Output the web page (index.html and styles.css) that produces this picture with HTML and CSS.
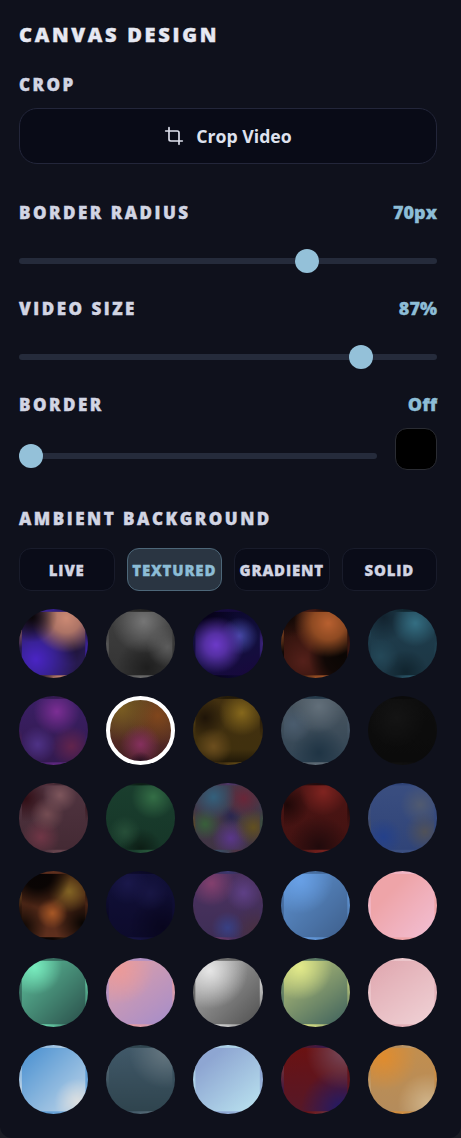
FILE: index.html
```html
<!DOCTYPE html>
<html lang="en">
<head>
<meta charset="utf-8">
<title>Canvas Design</title>
<link rel="stylesheet" href="styles.css">
</head>
<body>
<main class="panel">
  <h1 class="title">CANVAS DESIGN</h1>

  <section class="crop">
    <h2 class="label">CROP</h2>
    <button class="crop-btn" type="button">
      <svg class="crop-icon" viewBox="0 0 24 24" fill="none" stroke="currentColor" stroke-width="2" stroke-linecap="round" stroke-linejoin="round"><path d="M6 2v14a2 2 0 0 0 2 2h14"/><path d="M18 22V8a2 2 0 0 0-2-2H2"/></svg>
      <span>Crop Video</span>
    </button>
  </section>

  <section class="control">
    <div class="row"><h2 class="label">BORDER RADIUS</h2><span class="value">70px</span></div>
    <input class="slider" type="range" min="0" max="100" value="70">
  </section>

  <section class="control">
    <div class="row"><h2 class="label">VIDEO SIZE</h2><span class="value">87%</span></div>
    <input class="slider" type="range" min="20" max="100" value="87">
  </section>

  <section class="control border-control">
    <div class="row"><h2 class="label">BORDER</h2><span class="value">Off</span></div>
    <div class="border-row">
      <input class="slider" type="range" min="0" max="100" value="0">
      <div class="color"></div>
    </div>
  </section>

  <section class="ambient">
    <h2 class="label">AMBIENT BACKGROUND</h2>
    <div class="tabs">
      <button class="tab" type="button">LIVE</button>
      <button class="tab active" type="button">TEXTURED</button>
      <button class="tab" type="button">GRADIENT</button>
      <button class="tab" type="button">SOLID</button>
    </div>
    <div class="swatches">
      <div class="sw t1"></div><div class="sw t2"></div><div class="sw t3"></div><div class="sw t4"></div><div class="sw t5"></div>
      <div class="sw t6"></div><div class="sw t7 selected"></div><div class="sw t8"></div><div class="sw t9"></div><div class="sw t10"></div>
      <div class="sw t11"></div><div class="sw t12"></div><div class="sw t13"></div><div class="sw t14"></div><div class="sw t15"></div>
      <div class="sw t16"></div><div class="sw t17"></div><div class="sw t18"></div><div class="sw t19"></div><div class="sw t20"></div>
      <div class="sw t21"></div><div class="sw t22"></div><div class="sw t23"></div><div class="sw t24"></div><div class="sw t25"></div>
      <div class="sw t26"></div><div class="sw t27"></div><div class="sw t28"></div><div class="sw t29"></div><div class="sw t30"></div>
    </div>
  </section>
</main>
</body>
</html>
```
FILE: styles.css
```css
* { box-sizing: border-box; }
html, body { margin: 0; padding: 0; }
body {
  background: #1b1d25;
  font-family: "Open Sans", "Noto Sans", sans-serif;
  color: #d5d8e6;
}
.panel {
  padding: 21px 24px 24px 19px;
  background: #0f111c;
  border-radius: 0 0 12px 12px;
}
.title {
  margin: 0;
  font-size: 20px;
  line-height: 28px;
  font-weight: 800;
  letter-spacing: 2.7px;
  color: #e6e8f2;
  -webkit-text-stroke: .4px currentColor;
}
.label {
  margin: 0 0 -1px;
  padding-top: 1px;
  font-size: 17px;
  line-height: 22px;
  font-weight: 800;
  letter-spacing: 2.5px;
  color: #d2d5e3;
  -webkit-text-stroke: .4px currentColor;
}
.crop { margin-top: 24px; }
.crop-btn {
  display: flex;
  align-items: center;
  justify-content: center;
  gap: 12px;
  width: 100%;
  height: 56px;
  margin-top: 13px;
  background: #090b17;
  border: 1px solid #23263a;
  border-radius: 18px;
  color: #dfe2ee;
  font: 700 17.7px "Open Sans", sans-serif;
}
.crop-icon { width: 20px; height: 20px; }
.control { margin-top: 37px; }
.control + .control { margin-top: 24px; }
.row { display: flex; justify-content: space-between; align-items: center; }
.value {
  font-size: 18px;
  line-height: 22px;
  font-weight: 800;
  color: #8dbdd6;
  -webkit-text-stroke: .3px currentColor;
}
.slider {
  display: block;
  width: 100%;
  height: 24px;
  margin: 26px 0 0;
  padding: 0;
  background: transparent;
  -webkit-appearance: none;
  appearance: none;
}
.slider::-webkit-slider-runnable-track {
  height: 6px;
  border-radius: 3px;
  background: #252b3b;
}
.slider::-webkit-slider-thumb {
  -webkit-appearance: none;
  width: 24px;
  height: 24px;
  margin-top: -9px;
  border-radius: 50%;
  background: #94c1d9;
  border: 0;
}
.border-row { display: flex; align-items: flex-end; gap: 18px; margin-top: 13px; }
.border-row .slider { margin: 0 0 2px; flex: 1; min-width: 0; }
.color {
  flex: none;
  width: 42px;
  height: 42px;
  background: #000;
  border: 1px solid #2a2c33;
  border-radius: 12px;
}
.ambient { margin-top: 37px; }
.tabs {
  display: grid;
  grid-template-columns: repeat(4, 1fr);
  gap: 12px;
  margin-top: 19px;
}
.tab {
  height: 43px;
  padding: 0;
  background: #0a0c18;
  border: 1px solid #191c2b;
  border-radius: 12px;
  color: #d2d5e3;
  font: 800 15px "Open Sans", sans-serif;
  letter-spacing: .8px;
  -webkit-text-stroke: .3px currentColor;
}
.tab.active { background: #2a3542; border-color: #4d6779; color: #8dbdd6; }
.swatches {
  display: grid;
  grid-template-columns: repeat(5, 1fr);
  gap: 18px;
  margin-top: 18px;
}
.sw {
  aspect-ratio: 1;
  border-radius: 50%;
  background-size: 92% 92%;
  background-position: center;
  background-repeat: repeat;
}
.selected { border: 4px solid #fff; background-origin: border-box; background-clip: border-box; background-size: 100% 100%; }

.t1 { background-image:
  radial-gradient(circle at 16% 8%, #0a0608 0, transparent 32%),
  radial-gradient(circle at 70% 10%, #cc8a74 0, #ad7466 20%, transparent 48%),
  radial-gradient(circle at 22% 75%, #4a24c4 0, #3a229a 24%, transparent 60%),
  radial-gradient(circle at 75% 55%, #1a1230 0, transparent 30%),
  linear-gradient(135deg, #2a1c48, #2a1a50 60%, #241a4c); }
.t2 { background-image:
  radial-gradient(circle at 55% 15%, #767676 0, transparent 50%),
  radial-gradient(circle at 92% 55%, #5c5c5c 0, transparent 30%),
  radial-gradient(circle at 60% 88%, #1e1e1e 0, transparent 45%),
  linear-gradient(#3e3e3e, #343434); }
.t3 { background-image:
  radial-gradient(circle at 32% 52%, #6c3ac8 0, #5630a4 20%, transparent 52%),
  radial-gradient(circle at 68% 38%, #464aa8 0, transparent 32%),
  radial-gradient(circle at 20% 5%, #07021a 0, transparent 35%),
  linear-gradient(160deg, #0a0528, #12103e 55%, #18083c); }
.t4 { background-image:
  radial-gradient(circle at 70% 18%, #b86030 0, #8e4a22 24%, transparent 50%),
  radial-gradient(circle at 6% 6%, #0a0604 0, transparent 26%),
  radial-gradient(circle at 92% 70%, #0a0604 0, #100806 24%, transparent 46%),
  radial-gradient(circle at 30% 78%, #54201a 0, transparent 50%),
  linear-gradient(#34140e, #2a100a); }
.t5 { background-image:
  radial-gradient(circle at 70% 18%, #346e82 0, transparent 34%),
  radial-gradient(circle at 15% 70%, #244858 0, transparent 26%),
  radial-gradient(circle at 20% 8%, #12222e 0, transparent 32%),
  radial-gradient(circle at 55% 95%, #10242e 0, transparent 32%),
  linear-gradient(#1f3e4e, #1c3644); }
.t6 { background-image:
  radial-gradient(circle at 55% 20%, #7c2e94 0, transparent 38%),
  radial-gradient(circle at 25% 72%, #4e3286 0, transparent 28%),
  radial-gradient(circle at 78% 75%, #62244c 0, transparent 30%),
  linear-gradient(#3a1f64, #331a50); }
.t7 { background-image:
  radial-gradient(circle at 50% 98%, #1e0c1c 0, transparent 16%),
  radial-gradient(circle at 50% 70%, #85305e 0, transparent 34%),
  radial-gradient(circle at 22% 18%, #7a5c22 0, transparent 42%),
  radial-gradient(circle at 75% 28%, #80461c 0, transparent 42%),
  linear-gradient(#544020, #522a24 65%, #401c24); }
.t8 { background-image:
  radial-gradient(circle at 72% 22%, #86681c 0, transparent 34%),
  radial-gradient(circle at 28% 75%, #6c4e1e 0, transparent 28%),
  radial-gradient(circle at 15% 30%, #1e1408 0, transparent 30%),
  linear-gradient(#423010, #40300e 80%, #201808); }
.t9 { background-image:
  radial-gradient(circle at 55% 12%, #626f7a 0, transparent 40%),
  radial-gradient(circle at 15% 40%, #4a5c6e 0, transparent 28%),
  radial-gradient(circle at 55% 85%, #1f3444 0, transparent 42%),
  linear-gradient(#4a5660, #314454); }
.t10 { background-image:
  radial-gradient(circle at 40% 30%, #141414 0, transparent 50%),
  linear-gradient(#0d0d0d, #0b0b0b); }
.t11 { background-image:
  radial-gradient(circle at 60% 15%, #7e565c 0, transparent 26%),
  radial-gradient(circle at 40% 45%, #744c52 0, transparent 33%),
  radial-gradient(circle at 30% 80%, #703646 0, transparent 28%),
  radial-gradient(circle at 5% 20%, #300d14 0, transparent 30%),
  linear-gradient(#503440, #442a34); }
.t12 { background-image:
  radial-gradient(circle at 70% 18%, #346e46 0, transparent 32%),
  radial-gradient(circle at 25% 72%, #264e38 0, transparent 24%),
  radial-gradient(circle at 50% 100%, #0c1c14 0, transparent 30%),
  linear-gradient(#1a3e2e, #163628); }
.t13 { background-image:
  radial-gradient(circle at 28% 18%, #33607c 0, transparent 32%),
  radial-gradient(circle at 75% 20%, #6a2638 0, transparent 28%),
  radial-gradient(circle at 15% 60%, #38603a 0, transparent 24%),
  radial-gradient(circle at 90% 65%, #625020 0, transparent 26%),
  radial-gradient(circle at 55% 82%, #5a368a 0, transparent 30%),
  radial-gradient(circle at 55% 48%, #2a2650 0, transparent 24%),
  linear-gradient(#423a4a, #403444); }
.t14 { background-image:
  radial-gradient(circle at 62% 10%, #802420 0, transparent 34%),
  radial-gradient(circle at 5% 30%, #1e0808 0, transparent 30%),
  radial-gradient(circle at 55% 95%, #200a0c 0, transparent 44%),
  linear-gradient(#4c1514, #421211); }
.t15 { background-image:
  radial-gradient(circle at 20% 80%, #24408a 0, transparent 26%),
  radial-gradient(circle at 85% 72%, #505158 0, transparent 28%),
  radial-gradient(circle at 78% 30%, #505a70 0, transparent 30%),
  linear-gradient(#3a4e80, #304478); }
.t16 { background-image:
  radial-gradient(circle at 25% 0, #080404 0, #0a0504 18%, transparent 42%),
  radial-gradient(circle at 75% 28%, #826424 0, transparent 32%),
  radial-gradient(circle at 48% 62%, #a85826 0, transparent 30%),
  radial-gradient(circle at 96% 78%, #060402 0, transparent 36%),
  radial-gradient(circle at 0 85%, #060402 0, transparent 30%),
  linear-gradient(#3a1c0e, #60301e); }
.t17 { background-image:
  radial-gradient(circle at 30% 15%, #1a184a 0, transparent 30%),
  radial-gradient(circle at 65% 30%, #181644 0, transparent 30%),
  radial-gradient(circle at 85% 85%, #08061e 0, transparent 45%),
  linear-gradient(#111038, #0d0b2c); }
.t18 { background-image:
  radial-gradient(circle at 25% 15%, #84406e 0, transparent 32%),
  radial-gradient(circle at 75% 30%, #5e4086 0, transparent 28%),
  radial-gradient(circle at 50% 85%, #384084 0, transparent 26%),
  radial-gradient(circle at 95% 90%, #4a3040 0, transparent 30%),
  linear-gradient(#4c3260, #3e2e56); }
.t19 { background-image:
  radial-gradient(circle at 25% 10%, #68a0e6 0, transparent 45%),
  linear-gradient(135deg, #5e92d0, #3e5f8c); }
.t20 { background-image:
  linear-gradient(135deg, #eea4a8 30%, #f2bfd4); }
.t21 { background-image:
  radial-gradient(circle at 20% 10%, #78ecbe 0, transparent 36%),
  linear-gradient(135deg, #5ec09c, #2f5a52 90%); }
.t22 { background-image:
  radial-gradient(circle at 18% 15%, #ea9a9a 0, transparent 45%),
  linear-gradient(145deg, #dfa0a8, #a88ec8 95%); }
.t23 { background-image:
  radial-gradient(circle at 22% 15%, #e6e6e6 0, transparent 52%),
  linear-gradient(135deg, #b0b0b0, #5a5a5a 90%); }
.t24 { background-image:
  radial-gradient(circle at 25% 10%, #e2ea8a 0, transparent 44%),
  linear-gradient(145deg, #bcc67a, #44665e 95%); }
.t25 { background-image:
  linear-gradient(145deg, #dfa6ae, #f0d2d6); }
.t26 { background-image:
  radial-gradient(circle at 88% 85%, #dcdfe0 0, transparent 30%),
  linear-gradient(135deg, #5a9ad4 15%, #a8c8e4 80%); }
.t27 { background-image:
  radial-gradient(circle at 90% 5%, #667780 0, transparent 45%),
  linear-gradient(#405868, #2f444e); }
.t28 { background-image:
  linear-gradient(140deg, #8ea6d2 20%, #b8e0ee 95%); }
.t29 { background-image:
  radial-gradient(circle at 95% 5%, #754a5c 0, transparent 45%),
  radial-gradient(circle at 90% 95%, #221a66 0, transparent 48%),
  linear-gradient(#6a1212, #561828); }
.t30 { background-image:
  radial-gradient(circle at 20% 15%, #e08c2e 0, transparent 45%),
  radial-gradient(circle at 90% 88%, #d0b48a 0, transparent 38%),
  linear-gradient(#c28e4e, #b48c5c); }
```
